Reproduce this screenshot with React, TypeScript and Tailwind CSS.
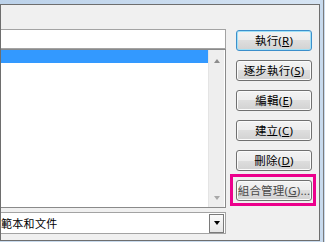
const font = "font-['Noto_Sans','Noto_Sans_CJK_TC',sans-serif]"

type BtnProps = {
    text: string
    mnemonic: string
    tail?: string
    isDefault?: boolean
    dim?: boolean
}

const DialogButton = ({ text, mnemonic, tail = "", isDefault, dim }: BtnProps) => {
    const border = isDefault
        ? "border-[#3c8fcb] shadow-[inset_0_0_0_1px_#9fe0f7]"
        : "border-[#707070] shadow-[inset_0_0_0_1px_#fbfbfb]"
    return (
        <div className={`h-[21px] w-[76px] rounded-[3px] border ${border} bg-[linear-gradient(#f3f3f3_0%,#ececec_50%,#dedede_50%,#d2d2d2_100%)] flex items-center justify-center`}>
            <span className={`text-[11.5px] leading-none tracking-[0.2px] ${dim ? "text-[#4a4a4a]" : "text-black"}`}>
                {text}(<span className="underline underline-offset-[1px]">{mnemonic}</span>){tail}
            </span>
        </div>
    )
}

export default function App() {
    return (
        <div className={`relative w-[325px] h-[242px] flex bg-[#c8daed] overflow-hidden ${font}`}>
            <div className="flex flex-col w-[320px]">
                <div className="h-[4px] bg-[linear-gradient(90deg,#bcd2ea,#d6e4f3)]" />
                <div className="h-[237px] border border-[#6e6e6e] bg-[#f0f0f0] flex pt-[24px]">
                    {/* left column: name box, list, combo */}
                    <div className="w-[225px] flex flex-col">
                        <div className="h-[20px] bg-white border-y border-r border-[#a3a3a3]" />
                        <div className="h-[159px] bg-white border-y border-r border-[#8a8a8a] flex">
                            <div className="w-[207px]">
                                <div className="h-[13px] bg-[#3399ff]" />
                            </div>
                            <div className="w-[16px] bg-[#eeeeee] border-l border-[#e4e4e4] flex flex-col items-center justify-between pt-[9px] pb-[7px]">
                                <div className="w-0 h-0 border-x-[3.5px] border-x-transparent border-b-[4px] border-b-[#8c8c8c]" />
                                <div className="w-0 h-0 border-x-[3.5px] border-x-transparent border-t-[4px] border-t-[#a8a8a8]" />
                            </div>
                        </div>
                        <div className="mt-[4px] h-[22px] bg-white border-y border-r border-[#a3a3a3] flex items-center justify-between pr-px">
                            <span className="text-[11px] leading-none text-black tracking-[0.3px]">範本和文件</span>
                            <div className="w-[15px] h-[19px] border border-[#7a7a7a] bg-[linear-gradient(#fafafa,#e6e6e6)] flex items-center justify-center">
                                <div className="w-0 h-0 border-x-[3.5px] border-x-transparent border-t-[4px] border-t-black" />
                            </div>
                        </div>
                    </div>
                    {/* right column: buttons */}
                    <div className="ml-[10px] mt-px flex flex-col gap-[9px]">
                        <DialogButton text="執行" mnemonic="R" isDefault />
                        <DialogButton text="逐步執行" mnemonic="S" />
                        <DialogButton text="編輯" mnemonic="E" />
                        <DialogButton text="建立" mnemonic="C" />
                        <DialogButton text="刪除" mnemonic="D" />
                        <DialogButton text="組合管理" mnemonic="G" tail="..." dim />
                    </div>
                </div>
            </div>
            <div className="w-[3px]" />
            <div className="w-px bg-[#7c7c7c]" />
            {/* highlight annotation */}
            <div className="absolute left-[230px] top-[174px] w-[86px] h-[32px] border-[3px] border-[#ec008c]" />
        </div>
    )
}
